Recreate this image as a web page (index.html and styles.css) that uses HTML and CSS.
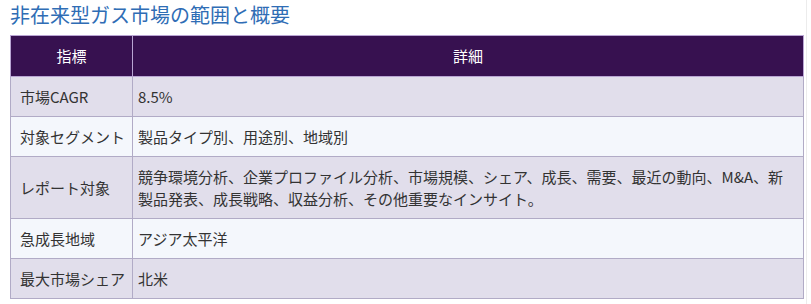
FILE: index.html
```html
<!DOCTYPE html>
<html lang="ja">
<head>
<meta charset="utf-8">
<link rel="stylesheet" href="styles.css">
</head>
<body>
<div class="wrap">
  <h2 class="title">非在来型ガス市場の範囲と概要</h2>
  <table class="summary">
    <colgroup><col class="c1"><col class="c2"></colgroup>
    <thead>
      <tr><th>指標</th><th>詳細</th></tr>
    </thead>
    <tbody>
      <tr class="odd"><td class="k">市場CAGR</td><td class="v">8.5%</td></tr>
      <tr class="even"><td class="k">対象セグメント</td><td class="v">製品タイプ別、用途別、地域別</td></tr>
      <tr class="odd"><td class="k">レポート対象</td><td class="v">競争環境分析、企業プロファイル分析、市場規模、シェア、成長、需要、最近の動向、M&amp;A、新製品発表、成長戦略、収益分析、その他重要なインサイト。</td></tr>
      <tr class="even"><td class="k">急成長地域</td><td class="v">アジア太平洋</td></tr>
      <tr class="odd"><td class="k">最大市場シェア</td><td class="v">北米</td></tr>
    </tbody>
  </table>
</div>
</body>
</html>
```

FILE: styles.css
```css
html, body {
  margin: 0;
  padding: 0;
  background: #ffffff;
}
body {
  font-family: "Noto Sans CJK JP", "Noto Sans", sans-serif;
  color: #333333;
}
.wrap {
  width: 796px;
  padding-left: 10px;
  border-right: 1px solid #ececec;
  min-height: 304px;
  box-sizing: content-box;
}
.title {
  margin: 0;
  padding-top: 1px;
  font-size: 20px;
  line-height: 28px;
  font-weight: normal;
  color: #2f6db5;
}
.summary {
  margin-top: 6px;
  width: 794px;
  border-collapse: collapse;
  table-layout: fixed;
  font-size: 15px;
  line-height: 22px;
}
.c1 { width: 122px; }
.summary th {
  background: #371150;
  color: #ffffff;
  font-weight: normal;
  text-align: center;
  height: 40px;
  padding: 0;
  border: 1px solid #b9a5d3;
}
.summary td {
  border: 1px solid #b1abc6;
  padding: 9px 6px 8px 5px;
  vertical-align: middle;
}
.summary td.k {
  padding-left: 9px;
  padding-right: 2px;
}
.odd td { background: #e1deeb; }
.even td { background: #f4f7fc; }
```
